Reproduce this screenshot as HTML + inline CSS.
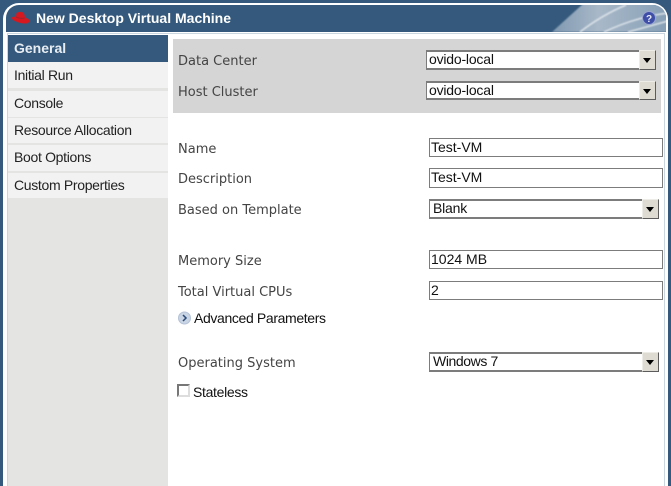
<!DOCTYPE html>
<html><head><meta charset="utf-8"><style>
html,body{margin:0;padding:0;background:#fff}
#p{position:relative;width:671px;height:486px;overflow:hidden;background:#34597c;font-family:"Liberation Sans",sans-serif}
#p div{position:absolute;box-sizing:border-box}
.lb{left:178px;font:13px/18px "DejaVu Sans",sans-serif;color:#444;white-space:nowrap}
.it{left:8px;width:160px;background:#f2f2f2;color:#222;font-size:14px;letter-spacing:-.32px;line-height:25px;padding-left:6px;white-space:nowrap}
.f{background:#fff;border:solid #7c7c7c;font-size:14px;letter-spacing:-.2px;line-height:15px;padding-left:2px;color:#111;white-space:nowrap;border-width:2px 1px 2px 1px}
.in{left:429px;width:234px;height:19px;border:1px solid #7c7c7c;background:#fff;font-size:14px;line-height:16px;padding-left:1px;color:#111;white-space:nowrap}
.b{right:-1px;top:-2px;width:17px;bottom:-2px;background:#dedbd3;border:1px solid;border-color:#eeece7 #5c5c5c #5c5c5c #eeece7}
.b:after{content:"";position:absolute;left:3px;top:7px;border:4px solid transparent;border-top:5px solid #000;border-bottom:0}
</style></head><body><div id="p">
<div style="left:3px;top:3px;width:665px;height:500px;background:#fff;border-radius:16px 16px 0 0"></div>
<div style="left:6px;top:5px;width:660px;height:27px;background:#34597c;border-radius:13px 13px 0 0;overflow:hidden">
<svg style="position:absolute;left:0;top:0" width="660" height="27"><defs><linearGradient id="g" x1="0" y1="0" x2="1" y2="0"><stop offset="0" stop-color="#7f98b0"/><stop offset=".4" stop-color="#a8b8c8"/><stop offset="1" stop-color="#87a0b6"/></linearGradient><filter id="bl"><feGaussianBlur stdDeviation=".8"/></filter></defs>
<polygon points="546,27 578,-2 662,-2 662,27" fill="url(#g)" filter="url(#bl)"/>
<path d="M574 27Q596 10 620 0M598 27Q630 12 662 8M622 27Q640 22 662 16" stroke="#dde4ea" stroke-width="1.500" fill="none" filter="url(#bl)"/></svg></div>
<svg style="position:absolute;left:11px;top:11px" width="20" height="15" viewBox="0 0 20 15"><path d="M5.500 2Q9 0 12 1.500Q13.500 2.500 14 6.500Q18 7.500 18.500 10Q18 12.500 14 12.500Q9 12.500 4 10Q0.500 8.500 1 6.500Q2 5 5 6Z" fill="#d8181f"/><path d="M5 6Q9 8 14 7" stroke="#8e2a35" stroke-width=".8" fill="none"/></svg>
<div style="left:36px;top:10px;color:#fff;font-size:14px;font-weight:bold;line-height:16px;white-space:nowrap">New Desktop Virtual Machine</div>
<svg style="position:absolute;left:642px;top:11px" width="14" height="14"><circle cx="7" cy="7" r="6.500" fill="#3f4fa8" stroke="#9aa6cf"/><text x="7" y="11" text-anchor="middle" font-family="Liberation Sans" font-size="10" font-weight="bold" fill="#e8ecf8">?</text></svg>
<div style="left:7px;top:33px;width:658px;height:460px;border:1px solid #c9d6e0;background:#fff"></div>
<div style="left:8px;top:35px;width:160px;height:451px;background:#e4e4e2"></div>
<div class="it" style="top:35px;height:27px;background:#34597c;color:#e8edf2;font-weight:bold;line-height:27px;letter-spacing:0">General</div>
<div class="it" style="top:62px;height:26px;line-height:26px">Initial Run</div>
<div class="it" style="top:91px;height:26px">Console</div>
<div class="it" style="top:118px;height:25px">Resource Allocation</div>
<div class="it" style="top:145px;height:26px">Boot Options</div>
<div class="it" style="top:173px;height:25px">Custom Properties</div>
<div style="left:173px;top:39px;width:488px;height:74px;background:#d5d5d5"></div>
<div class="lb" style="top:53px">Data Center</div>
<div class="lb" style="top:84px">Host Cluster</div>
<div class="lb" style="top:141px">Name</div>
<div class="lb" style="top:171px">Description</div>
<div class="lb" style="top:202px">Based on Template</div>
<div class="lb" style="top:253px">Memory Size</div>
<div class="lb" style="top:284px">Total Virtual CPUs</div>
<div class="lb" style="top:355px">Operating System</div>
<div class="f" style="left:426px;top:50px;width:230px;height:20px">ovido-local<div class="b"></div></div>
<div class="f" style="left:426px;top:81px;width:230px;height:19px">ovido-local<div class="b"></div></div>
<div class="in" style="top:138px">Test-VM</div>
<div class="in" style="top:168px;height:20px">Test-VM</div>
<div class="f" style="left:429px;top:199px;width:230px;height:20px;padding-left:3px">Blank<div class="b"></div></div>
<div class="in" style="top:250px">1024 MB</div>
<div class="in" style="top:281px">2</div>
<div class="f" style="left:429px;top:352px;width:230px;height:20px;padding-left:3px;letter-spacing:-.4px">Windows 7<div class="b"></div></div>
<svg style="position:absolute;left:178px;top:311px" width="14" height="14"><circle cx="6.500" cy="7" r="6" fill="#c9d4e4" stroke="#b4c2d6"/><path d="M5 4L8 7L5 10" stroke="#2b4a78" stroke-width="1.500" fill="none"/></svg>
<div style="left:194px;top:310px;font-size:14px;letter-spacing:-.36px;line-height:16px;color:#111;white-space:nowrap">Advanced Parameters</div>
<div style="left:177px;top:384px;width:13px;height:13px;border:2px solid;border-color:#777 #ddd #ddd #777;background:#fff"></div>
<div style="left:193px;top:384px;font-size:14px;letter-spacing:-.32px;line-height:16px;color:#111;white-space:nowrap">Stateless</div>
</div></body></html>
